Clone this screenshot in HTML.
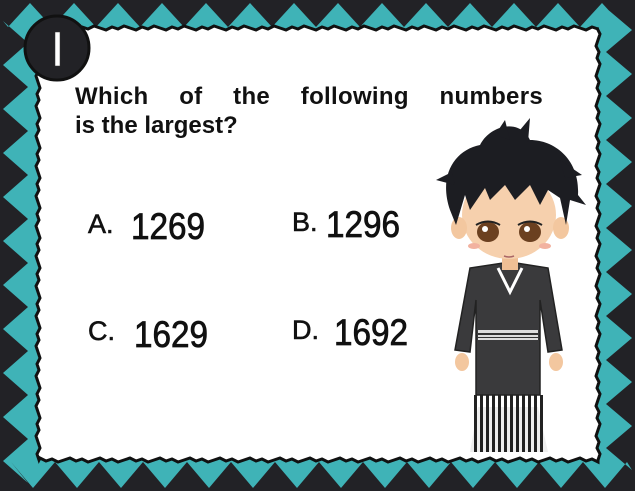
<!DOCTYPE html>
<html><head><meta charset="utf-8"><style>
html,body{margin:0;padding:0;background:#222226;}
#c{position:relative;width:635px;height:491px;overflow:hidden;background:#222226;font-family:"Liberation Sans",sans-serif;}
svg{position:absolute;left:0;top:0}
.t{position:absolute;font-weight:bold;color:#111;}
</style></head><body><div id="c">
<svg id="s" width="635" height="491" viewBox="0 0 635 491"></svg>
<div class="t" style="left:75px;top:83px;width:468px;font-size:24px;text-align:justify;text-align-last:justify;letter-spacing:0.3px">Which of the following numbers</div>
<div class="t" style="left:75px;top:112px;font-size:24px;">is the largest?</div>
<div class="t" style="left:88px;top:209px;font-size:27px;font-weight:normal;-webkit-text-stroke:0.6px #111">A.</div>
<div class="t" style="left:131px;top:206px;font-size:37px;font-weight:normal;-webkit-text-stroke:0.8px #111;transform:scaleX(0.9);transform-origin:left">1269</div>
<div class="t" style="left:292px;top:207px;font-size:27px;font-weight:normal;-webkit-text-stroke:0.6px #111">B.</div>
<div class="t" style="left:326px;top:204px;font-size:37px;font-weight:normal;-webkit-text-stroke:0.8px #111;transform:scaleX(0.9);transform-origin:left">1296</div>
<div class="t" style="left:88px;top:316px;font-size:27px;font-weight:normal;-webkit-text-stroke:0.6px #111">C.</div>
<div class="t" style="left:134px;top:314px;font-size:37px;font-weight:normal;-webkit-text-stroke:0.8px #111;transform:scaleX(0.9);transform-origin:left">1629</div>
<div class="t" style="left:292px;top:315px;font-size:27px;font-weight:normal;-webkit-text-stroke:0.6px #111">D.</div>
<div class="t" style="left:334px;top:312px;font-size:37px;font-weight:normal;-webkit-text-stroke:0.8px #111;transform:scaleX(0.9);transform-origin:left">1692</div>
</div>
<script>
var s=document.getElementById('s');var h='';
function zig(){var p=[];var x,y;
 for(x=8;x<=627;x+=22){p.push(x+','+((Math.round((x-8)/22)%2)?3:27));}
 for(y=8;y<=483;y+=22){p.push(((Math.round((y-8)/22)%2)?632:606)+','+y);}
 for(x=627;x>=8;x-=22){p.push(x+','+((Math.round((627-x)/22)%2)?488:462));}
 for(y=483;y>=8;y-=22){p.push(((Math.round((483-y)/22)%2)?3:28)+','+y);}
 return p.join(' ');}
h+='<polygon points="'+zig()+'" fill="#3fb3b7"/>';
function rag(){var p=[];var x,y,r=0;
 for(x=40;x<=598;x+=6){r=(r+7)%5;p.push(x+','+(28+(r-2)));}
 for(y=28;y<=460;y+=6){r=(r+3)%5;p.push((598+(r-2))+','+y);}
 for(x=598;x>=40;x-=6){r=(r+7)%5;p.push(x+','+(460+(r-2)));}
 for(y=460;y>=28;y-=6){r=(r+3)%5;p.push((38+(r-2))+','+y);}
 return p.join(' ');}
h+='<polygon points="'+rag()+'" fill="#fff" stroke="#111" stroke-width="3"/>';
h+='<circle cx="57" cy="48" r="32" fill="#222226" stroke="#111" stroke-width="3"/>';
h+='<rect x="55" y="32" width="5" height="34" fill="#fff" stroke="#333" stroke-width="0.5"/>';
h+='<g>';
h+='<path d="M478 407 L470 452 L548 452 L538 407 Z" fill="#eee"/>';
for(var i=0;i<12;i++){h+='<rect x="'+(474+i*6)+'" y="395" width="3" height="57" fill="#222"/>';}
h+='<path d="M470 268 L455 350 L470 352 L476 300 L476 395 L540 395 L540 300 L548 352 L562 350 L548 268 L510 262 Z" fill="#3a3a3c" stroke="#222" stroke-width="1.5"/>';
h+='<path d="M498 268 L510 292 L522 268" fill="none" stroke="#fff" stroke-width="3"/>';
h+='<rect x="478" y="330" width="60" height="10" fill="#ddd"/><rect x="478" y="333" width="60" height="2" fill="#333"/><rect x="478" y="337" width="60" height="1" fill="#333"/>';
h+='<ellipse cx="462" cy="362" rx="7" ry="9" fill="#f3c79f"/><ellipse cx="556" cy="362" rx="7" ry="9" fill="#f3c79f"/>';
h+='<rect x="502" y="248" width="16" height="22" fill="#efbf95"/>';
h+='<ellipse cx="509" cy="215" rx="47" ry="44" fill="#f6d0ad"/>';
h+='<ellipse cx="459" cy="228" rx="8" ry="11" fill="#f3c79f"/><ellipse cx="561" cy="228" rx="8" ry="11" fill="#f3c79f"/>';
h+='<path d="M450 210 C438 175 455 150 480 145 C490 125 520 118 530 140 C555 140 580 160 578 195 L586 205 L570 200 L566 225 L560 198 L548 190 L540 205 L530 185 L515 200 L505 185 L490 200 L485 188 L470 210 L465 195 L456 225 Z" fill="#1c1d22"/>';
h+='<path d="M495 135 L505 120 L510 140 Z M520 130 L530 118 L528 142 Z M560 160 L582 175 L565 178 Z M452 172 L436 180 L455 185 Z" fill="#1c1d22"/>';
h+='<ellipse cx="488" cy="232" rx="11" ry="10" fill="#6b4020"/><ellipse cx="530" cy="232" rx="11" ry="10" fill="#6b4020"/>';
h+='<circle cx="485" cy="229" r="3" fill="#fff"/><circle cx="527" cy="229" r="3" fill="#fff"/>';
h+='<path d="M476 225 Q488 218 500 225 M518 225 Q530 218 542 225" stroke="#222" stroke-width="2" fill="none"/>';
h+='<ellipse cx="474" cy="246" rx="6" ry="3" fill="#f2b2a0"/><ellipse cx="545" cy="246" rx="6" ry="3" fill="#f2b2a0"/>';
h+='<path d="M504 256 Q509 258 514 256" stroke="#a66" stroke-width="1.5" fill="none"/>';
h+='</g>';
s.innerHTML=h;
</script>
</body></html>
